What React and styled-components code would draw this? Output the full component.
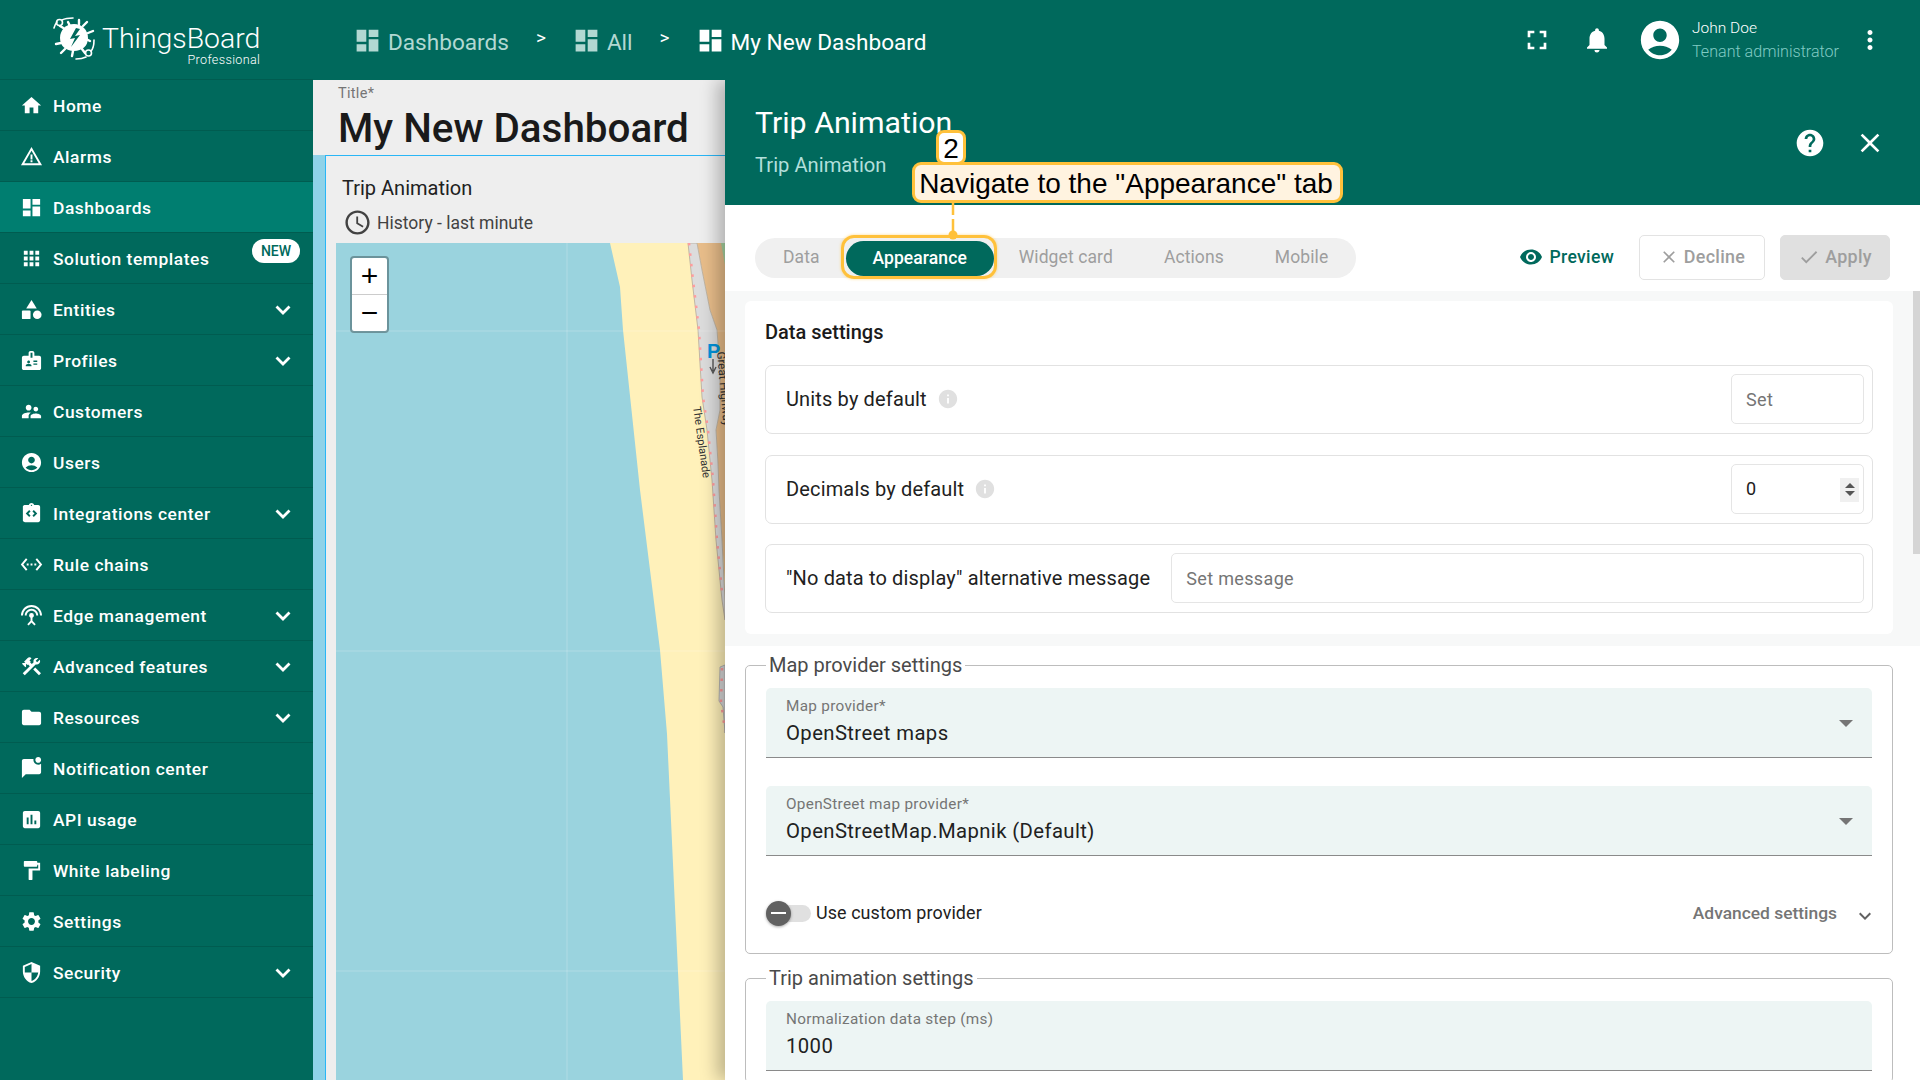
import React from 'react';
import styled, { createGlobalStyle } from 'styled-components';
import {
  MdHome, MdWarningAmber, MdDashboard, MdApps, MdBadge, MdSupervisorAccount, MdAccountCircle,
  MdIntegrationInstructions, MdSettingsEthernet, MdSettingsInputAntenna, MdConstruction, MdFolder,
  MdMarkChatUnread, MdAssessment, MdFormatPaint, MdSettings, MdSecurity, MdFullscreen,
  MdNotifications, MdMoreVert, MdHelp, MdClose, MdVisibility, MdCheck, MdInfo, MdAccessTime,
  MdKeyboardArrowDown,
} from 'react-icons/md';

const GlobalStyle = createGlobalStyle`
  html, body { margin: 0; height: 100%; overflow: hidden; }
  body { font-family: Roboto, "Liberation Sans", sans-serif; color: #212121; }
  * { box-sizing: border-box; }
`;

const TEAL = '#00695c';

const Page = styled.div`
  display: flex;
  width: 1920px;
  height: 1080px;
  overflow: hidden;
`;

const Sidebar = styled.nav`
  flex: 0 0 313px;
  background: ${TEAL};
  display: flex;
  flex-direction: column;
  position: relative;
  z-index: 3;
`;

const LogoBar = styled.div`
  height: 80px;
  display: flex;
  align-items: flex-start;
  padding: 17px 0 0 53px;
  gap: 5px;
  border-bottom: 1px solid #005c50;
`;

const LogoText = styled.div`
  display: flex;
  flex-direction: column;
  align-items: flex-end;
  color: #fff;
`;

const LogoName = styled.span`
  font-size: 28.4px;
  font-weight: 300;
  line-height: 29px;
  margin-top: 7px;
`;

const LogoSub = styled.span`
  font-size: 12.6px;
  font-weight: 300;
  line-height: 14px;
  letter-spacing: 0.35px;
`;

const NavRow = styled.div`
  height: 51px;
  flex: 0 0 51px;
  display: flex;
  align-items: center;
  padding: 0 22px 0 20px;
  gap: 10px;
  color: #fff;
  font-size: 17.4px;
  font-weight: 500;
  letter-spacing: 0.55px;
  border-bottom: 1px solid #005c50;
  position: relative;
  background: ${(p) => (p.$active ? '#007e70' : 'transparent')};
`;

const NavLabel = styled.span`
  flex: 1;
  padding-top: 1px;
`;

const NewBadge = styled.span`
  position: absolute;
  left: 252px;
  top: 6px;
  width: 48px;
  height: 24px;
  border-radius: 12px;
  background: #fff;
  color: ${TEAL};
  font-size: 14px;
  font-weight: 500;
  letter-spacing: 0;
  display: flex;
  align-items: center;
  justify-content: center;
`;

const ChevronMark = styled.svg`
  width: 16px;
  height: 10px;
  margin-top: 2px;
`;

const Chevron = () => (
  <ChevronMark viewBox="0 0 16 10">
    <path d="M1.5 1.5L8 8L14.5 1.5" fill="none" stroke="#fff" strokeWidth="2.8" />
  </ChevronMark>
);

const Main = styled.div`
  flex: 1;
  display: flex;
  flex-direction: column;
  min-width: 0;
`;

const TopBar = styled.header`
  flex: 0 0 80px;
  background: ${TEAL};
  display: flex;
  align-items: center;
  padding: 0 35px 0 41px;
  position: relative;
  z-index: 3;
`;

const Crumb = styled.div`
  display: flex;
  align-items: center;
  gap: 6px;
  font-size: 22.6px;
  padding-top: 4px;
  color: ${(p) => (p.$current ? '#fff' : '#b2d8d2')};

  svg {
    margin: -4px 0 0 -1px;
  }
`;

const CrumbSep = styled.span`
  color: #fff;
  font-size: 19px;
  margin: -6px 27px 0 27px;
`;

const TopActions = styled.div`
  margin-left: auto;
  display: flex;
  align-items: center;
  color: #fff;
`;

const TopIcon = styled.span`
  display: flex;
  font-size: ${(p) => p.$size || 28}px;
  margin-left: ${(p) => p.$gap || 0}px;
`;

const UserBlock = styled.div`
  display: flex;
  flex-direction: column;
  margin-left: 9px;
  width: 163px;
  font-weight: 300;
`;

const UserName = styled.span`
  font-size: 15.5px;
  line-height: 24px;
`;

const UserRole = styled.span`
  font-size: 16.1px;
  line-height: 24px;
  color: #80cbc4;
`;

const Body = styled.div`
  flex: 1;
  display: flex;
  min-height: 0;
`;

const Dashboard = styled.section`
  flex: 0 0 412px;
  display: flex;
  flex-direction: column;
  min-height: 0;
  background: #eee;
`;

const TitleBar = styled.div`
  flex: 0 0 75px;
  padding: 5px 0 0 25px;
  display: flex;
  flex-direction: column;
`;

const TitleLabel = styled.span`
  font-size: 14.5px;
  line-height: 18px;
  color: #757575;
  letter-spacing: 0.3px;
`;

const TitleValue = styled.span`
  font-size: 40.4px;
  line-height: 46px;
  margin-top: 3px;
  font-weight: 500;
  color: #1a1a1a;
  white-space: nowrap;
`;

const WidgetArea = styled.div`
  flex: 1;
  display: flex;
  min-height: 0;
  background: linear-gradient(90deg, #8fd2e8 0%, #8fd2e8 60%, #6fcdf2 100%);
  padding-left: 12px;
`;

const Widget = styled.div`
  flex: 1;
  display: flex;
  flex-direction: column;
  min-height: 0;
  background: #eee;
  border-top: 1px solid #29b6f6;
  border-left: 1px solid #29b6f6;
`;

const WidgetHead = styled.div`
  flex: 0 0 87px;
  padding: 19px 0 0 16px;
`;

const WidgetTitle = styled.div`
  font-size: 20px;
  line-height: 26px;
  color: #212121;
`;

const WidgetSub = styled.div`
  display: flex;
  align-items: center;
  gap: 5px;
  margin-top: 7px;
  padding-left: 1px;
  font-size: 17.5px;
  color: #424242;
`;

const MapBox = styled.div`
  flex: 1;
  margin-left: 10px;
  position: relative;
  min-height: 0;
`;

const MapDrawing = styled.svg`
  display: block;
  width: 100%;
  height: 100%;
`;

const ZoomControl = styled.div`
  position: absolute;
  left: 14px;
  top: 13px;
  width: 39px;
  height: 77px;
  background: #fff;
  border: 2px solid rgba(0, 0, 0, 0.3);
  border-radius: 4px;
  display: flex;
  flex-direction: column;
  background-clip: padding-box;
`;

const ZoomButton = styled.div`
  flex: 1;
  display: flex;
  align-items: center;
  justify-content: center;
  font-family: "Liberation Sans", sans-serif;
  font-size: 30px;
  line-height: 1;
  color: #000;
  border-top: ${(p) => (p.$divided ? '1px solid #ccc' : 'none')};
`;

const Panel = styled.aside`
  flex: 1;
  display: flex;
  flex-direction: column;
  min-width: 0;
  background: #fff;
  position: relative;
  z-index: 2;
  box-shadow: -8px 0 16px rgba(0, 0, 0, 0.25);
`;

const PanelHead = styled.div`
  flex: 0 0 125px;
  background: ${TEAL};
  display: flex;
  justify-content: space-between;
  align-items: center;
  padding: 0 34px 0 30px;
  color: #fff;
`;

const PanelTitles = styled.div`
  display: flex;
  flex-direction: column;
  margin-top: -4px;
`;

const PanelTitle = styled.span`
  font-size: 30.3px;
  line-height: 40px;
`;

const PanelSub = styled.span`
  font-size: 20.2px;
  line-height: 28px;
  margin-top: 8px;
  color: #b2dfdb;
`;

const PanelTools = styled.div`
  display: flex;
  align-items: center;
  gap: 28px;
  font-size: 32px;
`;

const ToolBar = styled.div`
  flex: 0 0 85px;
  padding: 30px 30px 11px;
  display: flex;
  align-items: center;
`;

const Tabs = styled.div`
  width: 601px;
  height: 40px;
  margin-top: 1px;
  padding: 0 0 0 28px;
  border-radius: 20px;
  background: #f0f0f0;
  display: flex;
  align-items: center;
`;

const Tab = styled.div`
  font-size: 17.5px;
  letter-spacing: 0.1px;
  color: #9e9e9e;
  margin: -2px ${(p) => p.$gap || 0}px 0 0;
`;

const ActiveTab = styled.div`
  width: 148px;
  height: 35px;
  margin: 0 25px 0 -2px;
  padding-bottom: 1px;
  border-radius: 17.5px;
  background: ${TEAL};
  color: #fff;
  font-size: 17.5px;
  font-weight: 500;
  letter-spacing: 0.1px;
  display: flex;
  align-items: center;
  justify-content: center;
`;

const Actions = styled.div`
  margin-left: auto;
  display: flex;
  align-items: center;
`;

const PreviewLink = styled.div`
  display: flex;
  align-items: center;
  gap: 7px;
  color: ${TEAL};
  font-size: 17.6px;
  font-weight: 500;
  letter-spacing: 0.3px;
  margin-right: 25px;
  padding-bottom: 1px;
`;

const ActionButton = styled.div`
  height: 45px;
  width: ${(p) => p.$width}px;
  margin-right: ${(p) => p.$gap || 0}px;
  border-radius: 5px;
  border: 1px solid ${(p) => (p.$filled ? '#e0e0e0' : '#e3e3e3')};
  background: ${(p) => (p.$filled ? '#e0e0e0' : '#fff')};
  color: #9e9e9e;
  font-size: 17.9px;
  font-weight: 500;
  letter-spacing: 0.3px;
  padding-bottom: 2px;
  display: flex;
  align-items: center;
  justify-content: center;
  gap: 5px;
`;

const ScrollArea = styled.div`
  flex: 1;
  min-height: 0;
  overflow: hidden;
  position: relative;
`;

const ScrollThumb = styled.div`
  position: absolute;
  right: 0;
  top: 0;
  width: 7px;
  height: 263px;
  background: #d5d5d5;
`;

const DataBand = styled.div`
  background: #f7f8f8;
  padding: 10px 27px 12px 20px;
`;

const Card = styled.div`
  background: #fff;
  border-radius: 6px;
  padding: 20px 20px 21px;
  display: flex;
  flex-direction: column;
  gap: 20.5px;
`;

const CardTitle = styled.div`
  font-size: 20px;
  font-weight: 500;
  line-height: 24px;
  color: #1b1b1b;
  margin: -1px 0 0.5px;
`;

const SettingRow = styled.div`
  height: 69px;
  padding: 0 8px 1px 20px;
  border: 1px solid #e2e2e2;
  border-radius: 7px;
  display: flex;
  align-items: center;
  font-size: 20px;
  letter-spacing: 0.15px;
  color: #212121;
`;

const InfoIcon = styled(MdInfo)`
  font-size: 22px;
  color: #e0e0e0;
  margin-left: 10px;
`;

const TextBox = styled.div`
  height: 50px;
  width: ${(p) => (p.$grow ? 'auto' : '133px')};
  flex: ${(p) => (p.$grow ? 1 : 'none')};
  margin-left: ${(p) => (p.$grow ? '21px' : 'auto')};
  border: 1px solid #e5e5e5;
  border-radius: 5px;
  padding: 0 14px;
  display: flex;
  align-items: center;
  position: relative;
  font-size: 18px;
  letter-spacing: 0.35px;
  color: ${(p) => (p.$value ? '#212121' : '#757575')};
`;

const Spinner = styled.span`
  position: absolute;
  right: 4px;
  top: 13px;
  width: 19px;
  height: 24px;
  background: #f0f0f0;
  display: flex;
  flex-direction: column;
  align-items: center;
  justify-content: center;
  gap: 3px;
`;

const SpinArrow = styled.i`
  width: 0;
  height: 0;
  border-left: 5px solid transparent;
  border-right: 5px solid transparent;
  border-${(p) => (p.$up ? 'bottom' : 'top')}: 5px solid #555;
`;

const Sections = styled.div`
  padding: 8px 27px 0 20px;
`;

const Group = styled.fieldset`
  margin: 0 0 13px;
  padding: 0 20px 11px;
  border: 1px solid #bdbdbd;
  border-radius: 5px;
`;

const GroupTitle = styled.legend`
  padding: 0 3px;
  font-size: 20px;
  line-height: 23px;
  color: #4a4a4a;
`;

const Field = styled.div`
  height: 70px;
  margin-top: ${(p) => (p.$first ? 11 : 28)}px;
  padding: 9px 20px 0;
  background: #edf5f4;
  border-radius: 5px 5px 0 0;
  border-bottom: 1px solid #8a8a8a;
  position: relative;
`;

const FieldLabel = styled.div`
  font-size: 15.3px;
  line-height: 18px;
  letter-spacing: 0.3px;
  color: #757575;
`;

const FieldValue = styled.div`
  font-size: 20.3px;
  line-height: 26px;
  margin-top: 5px;
  letter-spacing: 0.4px;
  color: #212121;
`;

const DropArrow = styled.i`
  position: absolute;
  right: 19px;
  top: 32px;
  width: 0;
  height: 0;
  border-left: 7px solid transparent;
  border-right: 7px solid transparent;
  border-top: 7px solid #757575;
`;

const ToggleRow = styled.div`
  margin-top: 28px;
  height: 58px;
  display: flex;
  align-items: center;
`;

const Toggle = styled.div`
  width: 45px;
  height: 17px;
  border-radius: 9px;
  background: #e0e0e0;
  position: relative;
  margin-right: 5px;
`;

const ToggleThumb = styled.span`
  position: absolute;
  left: 0;
  top: -4px;
  width: 25px;
  height: 25px;
  border-radius: 50%;
  background: #616161;
  box-shadow: 0 1px 3px rgba(0, 0, 0, 0.35);
  display: flex;
  align-items: center;
  justify-content: center;
  &::after {
    content: '';
    width: 15px;
    height: 2px;
    background: #fff;
  }
`;

const ToggleLabel = styled.span`
  font-size: 17.9px;
  letter-spacing: 0.1px;
  color: #212121;
  margin-top: -1px;
`;

const Advanced = styled.div`
  margin-left: auto;
  display: flex;
  align-items: center;
  gap: 16px;
  font-size: 17.4px;
  font-weight: 500;
  color: #757575;
`;

const AdvancedChevron = styled(MdKeyboardArrowDown)`
  font-size: 24px;
  margin: 6px -5px 0 0;
  color: #616161;
`;

const CalloutText = styled.div`
  position: absolute;
  left: 187px;
  top: 82px;
  width: 431px;
  height: 41px;
  padding: 2px 3px 0 0;
  border: 3px solid #ffc13b;
  border-radius: 9px;
  background: #fff3e0;
  color: #000;
  font-family: "Liberation Sans", sans-serif;
  font-size: 28px;
  white-space: nowrap;
  display: flex;
  align-items: center;
  justify-content: center;
`;

const CalloutBadge = styled.div`
  position: absolute;
  left: 211px;
  top: 50px;
  width: 30px;
  height: 35px;
  padding-top: 2px;
  border: 3px solid #ffc13b;
  border-radius: 8px;
  background: #fff;
  color: #000;
  font-family: "Liberation Sans", sans-serif;
  font-size: 28px;
  display: flex;
  align-items: center;
  justify-content: center;
`;

const CalloutLine = styled.svg`
  position: absolute;
  left: 222px;
  top: 123px;
  width: 12px;
  height: 38px;
`;

const TabHighlight = styled.div`
  position: absolute;
  left: 116px;
  top: 155px;
  width: 156px;
  height: 44px;
  border: 3px solid #ffc13b;
  border-radius: 13px;
  box-shadow: 0 0 3px rgba(255, 193, 59, 0.6);
`;

// drawn logo: bug shaped gear with two circuit arcs
const Logo = () => (
  <svg width="44" height="44" viewBox="0 0 44 44">
    <g fill="none" stroke="#fff" strokeWidth="1.6" strokeLinecap="round">
      <path d="M1 11C2 8 3 6 4 5" />
      <path d="M9 3C13 1 16 1 20 1" />
      <circle cx="6.5" cy="5.5" r="3" />
      <path d="M41 23C41 31 39 33 38 34" />
      <path d="M33 40C29 42 26 42 23 42" />
      <circle cx="35.5" cy="36" r="3" />
    </g>
    <g stroke="#fff" strokeWidth="2.4" strokeLinecap="round">
      <path d="M12 12L7 9M30 9L34 5M35 16L40 14M37 24L33 22M8 26L3 27M12 32L8 36M20 34L19 39M29 32L32 36M17 9L15 5M26 7L26 3" />
    </g>
    <path d="M21 7C29 7 35 13 35 21C35 29 29 34 21 34C13 34 7 29 7 21C7 13 13 7 21 7Z" fill="#fff" />
    <path d="M23 11L17 22L22 21L18 30L27 18L22 19L27 12Z" fill={TEAL} />
  </svg>
);

// triangle, square and circle as in the entities menu icon
const EntitiesIcon = () => (
  <svg width="23" height="23" viewBox="-1 -1 24 24" fill="#fff">
    <path d="M11 1L16.5 10H5.5Z" />
    <rect x="1" y="12" width="9" height="9" rx="1" />
    <circle cx="17" cy="16.5" r="4.5" />
  </svg>
);

const NAV = [
  { label: 'Home', icon: <MdHome size={23} /> },
  { label: 'Alarms', icon: <MdWarningAmber size={23} /> },
  { label: 'Dashboards', icon: <MdDashboard size={23} />, active: true },
  { label: 'Solution templates', icon: <MdApps size={23} />, badge: true },
  { label: 'Entities', icon: <EntitiesIcon />, more: true },
  { label: 'Profiles', icon: <MdBadge size={23} />, more: true },
  { label: 'Customers', icon: <MdSupervisorAccount size={23} /> },
  { label: 'Users', icon: <MdAccountCircle size={23} /> },
  { label: 'Integrations center', icon: <MdIntegrationInstructions size={23} />, more: true },
  { label: 'Rule chains', icon: <MdSettingsEthernet size={23} /> },
  { label: 'Edge management', icon: <MdSettingsInputAntenna size={23} />, more: true },
  { label: 'Advanced features', icon: <MdConstruction size={23} />, more: true },
  { label: 'Resources', icon: <MdFolder size={23} />, more: true },
  { label: 'Notification center', icon: <MdMarkChatUnread size={23} /> },
  { label: 'API usage', icon: <MdAssessment size={23} /> },
  { label: 'White labeling', icon: <MdFormatPaint size={23} /> },
  { label: 'Settings', icon: <MdSettings size={23} /> },
  { label: 'Security', icon: <MdSecurity size={23} />, more: true },
];

// tile of the street map, coordinates are page px minus the map origin (336, 243)
const MapTile = () => (
  <MapDrawing viewBox="0 0 389 837" preserveAspectRatio="none">
    <rect width="389" height="837" fill="#fff1ba" />
    <path d="M0 0H274L284 44L287 87L304 247L324 407L331 491L347 837H0Z" fill="#9ad3de" />
    <path d="M361 0H389V340L386 297L383 247L382 220L380 187L384 167L384 127L381 87L374 67L366 27Z" fill="#e8bd8a" />
    <path d="M385 0H389V22Z" fill="#a8d5a2" />
    <path d="M352 0L361 0L366 27L374 67L381 87L384 127L384 167L380 187L382 220L383 247L386 297L389 357V377L386 357L380 297L376 237L371 187L366 154L362 87L356 37Z" fill="#dcdcdc" stroke="#b5a99a" strokeWidth="0.8" />
    <path d="M353 0L357 37L363 87L367 154L372 187L377 237L381 297L386 350" fill="none" stroke="#ff9c9c" strokeWidth="2.5" strokeDasharray="2.5 8" />
    <path d="M389 422L384 424L383 458L387 464L389 490Z" fill="#d8d8d8" stroke="#a9a9a9" strokeWidth="0.8" />
    <path d="M386 425L385 458L389 488" fill="none" stroke="#ff9c9c" strokeWidth="2.5" strokeDasharray="2.5 8" />
    <g stroke="#ffffff" strokeOpacity="0.22" strokeWidth="1">
      <path d="M231 0V837M0 88H389M0 408H389M0 728H389" />
    </g>
    <text x="371" y="115" fontFamily="Liberation Sans, sans-serif" fontSize="20" fontWeight="700" fill="#0092da">P</text>
    <path d="M377 116V128M374 124L377 130L380 124" fill="none" stroke="#555" strokeWidth="1.4" />
    <text fontFamily="Roboto, sans-serif" fontSize="11.5" fill="#333" transform="translate(381 109) rotate(85)">Great Highway</text>
    <text fontFamily="Roboto, sans-serif" fontSize="11" fill="#333" transform="translate(357 164) rotate(82)">The Esplanade</text>
  </MapDrawing>
);

const App = () => (
  <Page>
    <GlobalStyle />
    <Sidebar>
      <LogoBar>
        <Logo />
        <LogoText>
          <LogoName>ThingsBoard</LogoName>
          <LogoSub>Professional</LogoSub>
        </LogoText>
      </LogoBar>
      {NAV.map((item) => (
        <NavRow key={item.label} $active={item.active}>
          {item.icon}
          <NavLabel>{item.label}</NavLabel>
          {item.badge && <NewBadge>NEW</NewBadge>}
          {item.more && <Chevron />}
        </NavRow>
      ))}
    </Sidebar>

    <Main>
      <TopBar>
        <Crumb><MdDashboard size={29} />Dashboards</Crumb>
        <CrumbSep>&gt;</CrumbSep>
        <Crumb><MdDashboard size={29} />All</Crumb>
        <CrumbSep>&gt;</CrumbSep>
        <Crumb $current><MdDashboard size={29} />My New Dashboard</Crumb>
        <TopActions>
          <TopIcon $size={32}><MdFullscreen /></TopIcon>
          <TopIcon $size={30} $gap={29}><MdNotifications /></TopIcon>
          <TopIcon $size={46} $gap={25}><MdAccountCircle /></TopIcon>
          <UserBlock>
            <UserName>John Doe</UserName>
            <UserRole>Tenant administrator</UserRole>
          </UserBlock>
          <TopIcon $size={30}><MdMoreVert /></TopIcon>
        </TopActions>
      </TopBar>

      <Body>
        <Dashboard>
          <TitleBar>
            <TitleLabel>Title*</TitleLabel>
            <TitleValue>My New Dashboard</TitleValue>
          </TitleBar>
          <WidgetArea>
            <Widget>
              <WidgetHead>
                <WidgetTitle>Trip Animation</WidgetTitle>
                <WidgetSub><MdAccessTime size={29} color="#424242" />History - last minute</WidgetSub>
              </WidgetHead>
              <MapBox>
                <MapTile />
                <ZoomControl>
                  <ZoomButton>+</ZoomButton>
                  <ZoomButton $divided>−</ZoomButton>
                </ZoomControl>
              </MapBox>
            </Widget>
          </WidgetArea>
        </Dashboard>

        <Panel>
          <PanelHead>
            <PanelTitles>
              <PanelTitle>Trip Animation</PanelTitle>
              <PanelSub>Trip Animation</PanelSub>
            </PanelTitles>
            <PanelTools>
              <MdHelp />
              <MdClose />
            </PanelTools>
          </PanelHead>

          <ToolBar>
            <Tabs>
              <Tab $gap={28}>Data</Tab>
              <ActiveTab>Appearance</ActiveTab>
              <Tab $gap={51}>Widget card</Tab>
              <Tab $gap={51}>Actions</Tab>
              <Tab>Mobile</Tab>
            </Tabs>
            <Actions>
              <PreviewLink><MdVisibility size={24} />Preview</PreviewLink>
              <ActionButton $width={126} $gap={15}><MdClose size={20} />Decline</ActionButton>
              <ActionButton $width={110} $filled><MdCheck size={22} />Apply</ActionButton>
            </Actions>
          </ToolBar>

          <ScrollArea>
            <DataBand>
              <Card>
                <CardTitle>Data settings</CardTitle>
                <SettingRow>
                  Units by default<InfoIcon />
                  <TextBox>Set</TextBox>
                </SettingRow>
                <SettingRow>
                  Decimals by default<InfoIcon />
                  <TextBox $value>0<Spinner><SpinArrow $up /><SpinArrow /></Spinner></TextBox>
                </SettingRow>
                <SettingRow>
                  "No data to display" alternative message
                  <TextBox $grow>Set message</TextBox>
                </SettingRow>
              </Card>
            </DataBand>
            <Sections>
              <Group>
                <GroupTitle>Map provider settings</GroupTitle>
                <Field $first>
                  <FieldLabel>Map provider*</FieldLabel>
                  <FieldValue>OpenStreet maps</FieldValue>
                  <DropArrow />
                </Field>
                <Field>
                  <FieldLabel>OpenStreet map provider*</FieldLabel>
                  <FieldValue>OpenStreetMap.Mapnik (Default)</FieldValue>
                  <DropArrow />
                </Field>
                <ToggleRow>
                  <Toggle><ToggleThumb /></Toggle>
                  <ToggleLabel>Use custom provider</ToggleLabel>
                  <Advanced>Advanced settings<AdvancedChevron /></Advanced>
                </ToggleRow>
              </Group>
              <Group>
                <GroupTitle>Trip animation settings</GroupTitle>
                <Field $first>
                  <FieldLabel>Normalization data step (ms)</FieldLabel>
                  <FieldValue>1000</FieldValue>
                </Field>
              </Group>
            </Sections>
            <ScrollThumb />
          </ScrollArea>

          <CalloutBadge>2</CalloutBadge>
          <CalloutText>Navigate to the "Appearance" tab</CalloutText>
          <CalloutLine viewBox="0 0 12 38">
            <path d="M6 0V30" stroke="#ffc13b" strokeWidth="2.5" strokeDasharray="12 4" />
            <circle cx="6" cy="32" r="4.5" fill="#ffc13b" />
          </CalloutLine>
          <TabHighlight />
        </Panel>
      </Body>
    </Main>
  </Page>
);

export default App;
